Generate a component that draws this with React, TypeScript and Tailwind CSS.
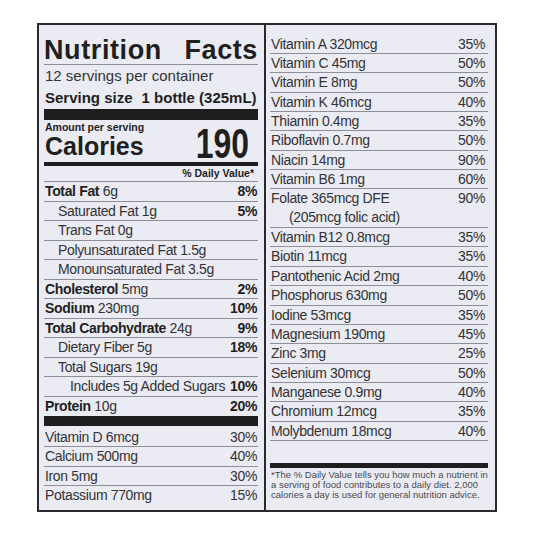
type Row = { b?: string; r?: string; p?: string; indent?: number };

const mainRows: Row[] = [
  { b: "Total Fat", r: " 6g", p: "8%" },
  { r: "Saturated Fat 1g", p: "5%", indent: 1 },
  { r: "Trans Fat 0g", indent: 1 },
  { r: "Polyunsaturated Fat 1.5g", indent: 1 },
  { r: "Monounsaturated Fat 3.5g", indent: 1 },
  { b: "Cholesterol", r: " 5mg", p: "2%" },
  { b: "Sodium", r: " 230mg", p: "10%" },
  { b: "Total Carbohydrate", r: " 24g", p: "9%" },
  { r: "Dietary Fiber 5g", p: "18%", indent: 1 },
  { r: "Total Sugars 19g", indent: 1 },
  { r: "Includes 5g Added Sugars", p: "10%", indent: 2 },
];

const minerals = [
  ["Vitamin D 6mcg", "30%"],
  ["Calcium 500mg", "40%"],
  ["Iron 5mg", "30%"],
  ["Potassium 770mg", "15%"],
];

const vitamins = [
  ["Vitamin A 320mcg", "35%"],
  ["Vitamin C 45mg", "50%"],
  ["Vitamin E 8mg", "50%"],
  ["Vitamin K 46mcg", "40%"],
  ["Thiamin 0.4mg", "35%"],
  ["Riboflavin 0.7mg", "50%"],
  ["Niacin 14mg", "90%"],
  ["Vitamin B6 1mg", "60%"],
];

const vitamins2 = [
  ["Vitamin B12 0.8mcg", "35%"],
  ["Biotin 11mcg", "35%"],
  ["Pantothenic Acid 2mg", "40%"],
  ["Phosphorus 630mg", "50%"],
  ["Iodine 53mcg", "35%"],
  ["Magnesium 190mg", "45%"],
  ["Zinc 3mg", "25%"],
  ["Selenium 30mcg", "50%"],
  ["Manganese 0.9mg", "40%"],
  ["Chromium 12mcg", "35%"],
  ["Molybdenum 18mcg", "40%"],
];

function LeftRow({ row, last }: { row: Row; last?: boolean }) {
  const pad = row.indent === 2 ? "pl-[26px]" : row.indent === 1 ? "pl-[14px]" : "pl-[1px]";
  return (
    <div
      className={`flex justify-between h-[19.5px] leading-[18.5px] text-[14px] tracking-[-0.35px] pr-[1px] ${pad} ${
        last ? "" : "border-b border-[#8e8e96]"
      }`}
    >
      <span>
        {row.b && <span className="font-bold text-[#1f1f1f]">{row.b}</span>}
        {row.r}
      </span>
      {row.p && <span className="font-bold text-[#1f1f1f]">{row.p}</span>}
    </div>
  );
}

function PlainRow({ label, pct }: { label: string; pct: string }) {
  return (
    <div className="flex justify-between h-[19.35px] leading-[18.35px] text-[14px] tracking-[-0.35px] border-b border-[#8e8e96] pl-[1px] pr-[3px]">
      <span>{label}</span>
      <span>{pct}</span>
    </div>
  );
}

export default function App() {
  return (
    <div className="w-[533px] h-[533px] bg-white pt-[23px] pl-[37px] font-['Liberation_Sans',Arial,sans-serif] text-[#333336]">
      <div className="flex w-[460px] h-[489px] border-2 border-[#2a2a2c] bg-[#ebebf3]">
        {/* left column */}
        <div className="flex flex-col w-[227px] pl-[5px] pr-[6px] border-r-2 border-[#2a2a2c]">
          <div className="flex justify-between items-start h-[40px] pt-[12px] border-b border-[#8e8e96] text-[27px] leading-[27px] font-black tracking-[0.6px] text-[#1f1f1f]">
            <span>Nutrition</span>
            <span>Facts</span>
          </div>
          <div className="h-[22px] leading-[22px] text-[15px] pl-[1px]">12 servings per container</div>
          <div className="h-[22px] leading-[22px] text-[15px] font-bold text-[#1f1f1f] pl-[1px]">
            Serving size<span className="ml-[9px]">1 bottle (325mL)</span>
          </div>
          <div className="h-[11px] bg-[#1e1e20]" />
          <div className="flex justify-between items-start h-[46px] border-b-4 border-[#1e1e20] text-[#1f1f1f] pl-[1px]">
            <div className="flex flex-col pt-[1px]">
              <span className="text-[10.5px] leading-[13px] font-bold">Amount per serving</span>
              <span className="text-[25px] leading-[25px] font-bold">Calories</span>
            </div>
            <span className="inline-block text-[42px] leading-[36px] font-bold origin-right scale-x-[0.76] mr-[9px] mt-[6px]">
              190
            </span>
          </div>
          <div className="h-[16px] leading-[15px] text-[10.5px] font-bold text-right border-b border-[#8e8e96] pr-[4px] text-[#1f1f1f]">
            % Daily Value*
          </div>
          {mainRows.map((r, i) => (
            <LeftRow key={i} row={r} />
          ))}
          <LeftRow row={{ b: "Protein", r: " 10g", p: "20%" }} last />
          <div className="h-[10px] bg-[#1e1e20]" />
          <div className="pt-[1.5px]">
            {minerals.map(([l, p], i) => (
              <div
                key={l}
                className={`flex justify-between h-[19.5px] leading-[18.5px] text-[14px] tracking-[-0.35px] pl-[1px] pr-[1px] ${
                  i < 3 ? "border-b border-[#8e8e96]" : ""
                }`}
              >
                <span>{l}</span>
                <span>{p}</span>
              </div>
            ))}
          </div>
        </div>

        {/* right column */}
        <div className="flex flex-col w-[227px] pl-[4px] pr-[5px] pt-[9.7px]">
          {vitamins.map(([l, p]) => (
            <PlainRow key={l} label={l} pct={p} />
          ))}
          <div className="flex justify-between h-[38.7px] leading-[19px] text-[14px] tracking-[-0.35px] border-b border-[#8e8e96] pl-[1px] pr-[3px]">
            <div className="flex flex-col">
              <span>Folate 365mcg DFE</span>
              <span className="pl-[18px]">(205mcg folic acid)</span>
            </div>
            <span>90%</span>
          </div>
          {vitamins2.map(([l, p]) => (
            <PlainRow key={l} label={l} pct={p} />
          ))}
          <div className="mt-auto pb-[10px]">
            <div className="h-[5px] bg-[#1e1e20]" />
            <p className="pt-[2.4px] text-[9.5px] leading-[10px] text-[#4a4a4e] pl-[1px]">
              *The % Daily Value tells you how much a nutrient in a serving of food contributes to a daily diet. 2,000
              calories a day is used for general nutrition advice.
            </p>
          </div>
        </div>
      </div>
    </div>
  );
}
